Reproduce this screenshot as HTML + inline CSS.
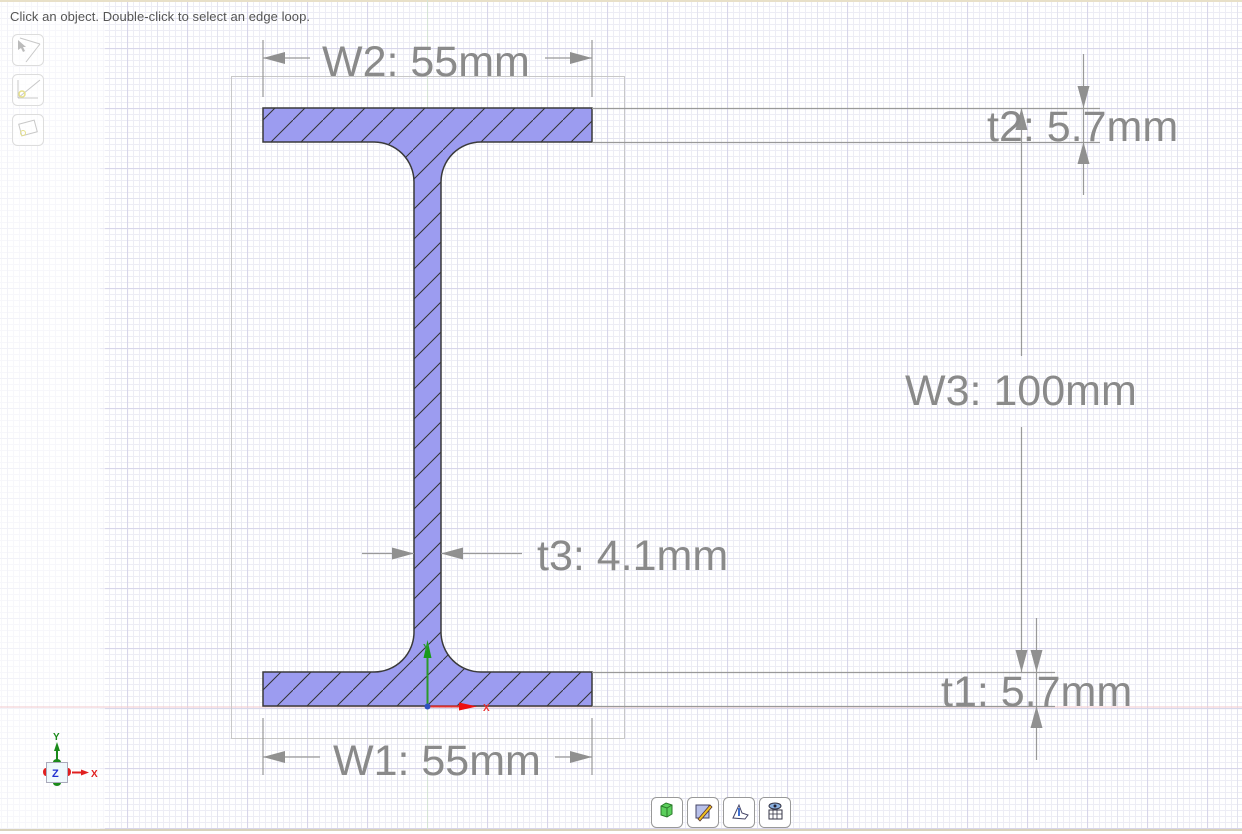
<!DOCTYPE html>
<html><head><meta charset="utf-8"><style>
html,body{margin:0;padding:0;width:1242px;height:834px;overflow:hidden;background:#fff;font-family:"Liberation Sans",sans-serif}
</style></head><body>
<svg width="1242" height="834" viewBox="0 0 1242 834" xmlns="http://www.w3.org/2000/svg" style="position:absolute;left:0;top:0">
<defs>
<pattern id="minor" width="6" height="6" patternUnits="userSpaceOnUse" x="1" y="0">
<path d="M0.5 0V6M0 0.5H6" stroke="#ededf5" stroke-width="1" fill="none"/>
</pattern>
<pattern id="mid" width="30" height="30" patternUnits="userSpaceOnUse" x="7" y="18">
<path d="M0.5 0V30M0 0.5H30" stroke="#e3e3ef" stroke-width="1" fill="none"/>
</pattern>
<pattern id="major" width="60" height="60" patternUnits="userSpaceOnUse" x="7" y="48">
<path d="M0.5 0V60M0 0.5H60" stroke="#d8d6ea" stroke-width="1.2" fill="none"/>
</pattern>
<pattern id="hatch" width="30" height="30" patternUnits="userSpaceOnUse" x="263" y="0">
<path d="M-2 32L32 -2" stroke="#333" stroke-width="1"/>
</pattern>
</defs>
<rect width="1242" height="834" fill="#fff"/>
<rect x="0" y="0" width="1242" height="834" fill="url(#minor)"/>
<rect x="0" y="0" width="1242" height="834" fill="url(#mid)"/>
<rect x="100" y="0" width="1142" height="834" fill="url(#major)"/>
<rect x="0" y="0" width="105" height="834" fill="#fff" opacity="0.55"/>
<rect x="0" y="0" width="1242" height="2" fill="#e8e0c8"/>
<rect x="0" y="829" width="1242" height="5" fill="#fff"/>
<rect x="0" y="829" width="1242" height="2" fill="#d8d2bc"/>
<line x1="0" y1="707" x2="1242" y2="707" stroke="#f2c8cc" stroke-width="1"/>
<line x1="427.5" y1="0" x2="427.5" y2="829" stroke="#d6e4d6" stroke-width="1"/>
<rect x="231.5" y="76.5" width="393" height="662" fill="none" stroke="#c8c8c8" stroke-width="1"/>
<path d="M263,108 H592 V142 H481 A40,40 0 0 0 441,182 V632 A40,40 0 0 0 481,672 H592 V706 H263 V672 H374 A40,40 0 0 0 414,632 V182 A40,40 0 0 0 374,142 H263 Z" fill="#9c9cf0"/>
<path d="M263,108 H592 V142 H481 A40,40 0 0 0 441,182 V632 A40,40 0 0 0 481,672 H592 V706 H263 V672 H374 A40,40 0 0 0 414,632 V182 A40,40 0 0 0 374,142 H263 Z" fill="url(#hatch)" stroke="#3a3a3a" stroke-width="1.5"/>
<g stroke="#999" stroke-width="1.2" fill="none">
<line x1="263" y1="40" x2="263" y2="97"/><line x1="592" y1="40" x2="592" y2="97"/>
<line x1="263" y1="58" x2="310" y2="58"/><line x1="545" y1="58" x2="592" y2="58"/>
<line x1="263" y1="718" x2="263" y2="775"/><line x1="592" y1="718" x2="592" y2="775"/>
<line x1="263" y1="757" x2="320" y2="757"/><line x1="555" y1="757" x2="592" y2="757"/>
<line x1="592" y1="108.5" x2="1100" y2="108.5"/><line x1="592" y1="142.5" x2="1100" y2="142.5"/>
<line x1="592" y1="672.5" x2="1055" y2="672.5"/><line x1="592" y1="706.5" x2="1055" y2="706.5"/>
<line x1="1021.5" y1="108" x2="1021.5" y2="356"/><line x1="1021.5" y1="427" x2="1021.5" y2="672"/>
<line x1="1083.5" y1="54" x2="1083.5" y2="195"/>
<line x1="1036.5" y1="618" x2="1036.5" y2="760"/>
<line x1="362" y1="553.5" x2="414" y2="553.5"/><line x1="441" y1="553.5" x2="522" y2="553.5"/>
</g>
<g fill="#909090">
<path d="M263,58 l22,-6 v12z"/><path d="M592,58 l-22,-6 v12z"/>
<path d="M263,757 l22,-6 v12z"/><path d="M592,757 l-22,-6 v12z"/>
<path d="M1021.5,108 l-6,22 h12z"/><path d="M1021.5,672 l-6,-22 h12z"/>
<path d="M1083.5,108 l-6,-22 h12z"/><path d="M1083.5,142 l-6,22 h12z"/>
<path d="M1036.5,672 l-6,-22 h12z"/><path d="M1036.5,706 l-6,22 h12z"/>
<path d="M414,553.5 l-22,-6 v12z"/><path d="M441,553.5 l22,-6 v12z"/>
</g>
<g fill="#8a8a8a" font-family="Liberation Sans, sans-serif" font-size="43">
<text x="322" y="76">W2: 55mm</text>
<text x="333" y="775">W1: 55mm</text>
<text x="905" y="405">W3: 100mm</text>
<text x="537" y="570">t3: 4.1mm</text>
<text x="987" y="141">t2: 5.7mm</text>
<text x="941" y="706">t1: 5.7mm</text>
</g>
<line x1="427.5" y1="706" x2="427.5" y2="655" stroke="#2a9a2a" stroke-width="2"/>
<path d="M427.5,640 l-4,18 h8z" fill="#1a9a1a"/>
<line x1="427" y1="706.5" x2="462" y2="706.5" stroke="#e03030" stroke-width="2"/>
<path d="M477,706.5 l-18,-4 v8z" fill="#ee1010"/>
<circle cx="427.5" cy="706.5" r="3" fill="#3050c0"/>
<text x="423" y="651" font-size="10" fill="#2a9a2a" font-weight="bold">Y</text>
<text x="483" y="711" font-size="10" fill="#ee3030" font-weight="bold">X</text>
<line x1="57" y1="760" x2="57" y2="748" stroke="#1a8a1a" stroke-width="2"/>
<path d="M57,742 l-3,9 h6z" fill="#1a8a1a"/>
<text x="53" y="740" font-size="10" font-weight="bold" fill="#1a8a1a">Y</text>
<rect x="46.5" y="762.5" width="21" height="20" fill="#eef8fc" stroke="#aab" stroke-width="1"/>
<text x="52" y="777" font-size="11" font-weight="bold" fill="#2030d0">Z</text>
<path d="M46,768 a3,4 0 0 0 0,8z M68,768 a3,4 0 0 1 0,8z" fill="#e02020"/>
<path d="M53,762 a4,3 0 0 1 8,0z M53,783 a4,3 0 0 0 8,0z" fill="#1a8a1a"/>
<line x1="72" y1="772.5" x2="82" y2="772.5" stroke="#e02020" stroke-width="2"/>
<path d="M89,772.5 l-8,-3 v6z" fill="#e02020"/>
<text x="91" y="777" font-size="10" font-weight="bold" fill="#e02020">X</text>
<g fill="#fff" fill-opacity="0.6" stroke="#ddd" stroke-width="1">
<rect x="12.5" y="34.5" width="31" height="31" rx="5"/>
<rect x="12.5" y="74.5" width="31" height="31" rx="5"/>
<rect x="12.5" y="114.5" width="31" height="31" rx="5"/>
</g>
<g stroke="#c8c8c8" stroke-width="1" fill="none">
<line x1="20" y1="38" x2="40" y2="44"/><line x1="40" y1="44" x2="26" y2="62"/>
<line x1="18" y1="98" x2="40" y2="80"/><line x1="18" y1="80" x2="18" y2="98"/><line x1="18" y1="98" x2="38" y2="98"/>
<rect x="20" y="122" width="16" height="12" transform="rotate(-15 28 128)"/>
</g>
<path d="M18,40 l0,10 l3,-2 l2,4 l2,-1 l-2,-4 l3,0z" fill="#bbb"/>
<circle cx="22" cy="94" r="3" fill="none" stroke="#e6e08a" stroke-width="1.5"/>
<circle cx="23" cy="133" r="2.5" fill="none" stroke="#e6e08a" stroke-width="1"/>
<g fill="#fff" stroke="#999" stroke-width="1">
<rect x="651.5" y="797.5" width="31" height="30" rx="5"/>
<rect x="687.5" y="797.5" width="31" height="30" rx="5"/>
<rect x="723.5" y="797.5" width="31" height="30" rx="5"/>
<rect x="759.5" y="797.5" width="31" height="30" rx="5"/>
</g>
<path d="M661,806 l5,-3 l6,2 v9 l-5,3 l-6,-2z" fill="#5ccf5c" stroke="#2a7a2a" stroke-width="1"/>
<path d="M661,806 l6,2 l5,-3 M667,808 v9" stroke="#2a7a2a" fill="none" stroke-width="1"/>
<rect x="696" y="805" width="13" height="13" fill="#b8c0e8" stroke="#446" stroke-width="1"/>
<path d="M698,819 l12,-14 l2,2 l-12,14z" fill="#f0c020" stroke="#533" stroke-width="0.8"/>
<path d="M733,818 l6,-13 l3,8 l6,2 l-3,4z" fill="#fff" stroke="#446" stroke-width="1"/>
<path d="M739,808 v8" stroke="#4070d0" stroke-width="2"/>
<rect x="769" y="810" width="13" height="9" fill="#fff" stroke="#334" stroke-width="1"/>
<path d="M769,814 h13 M773,810 v9 M777,810 v9" stroke="#334" stroke-width="0.8"/>
<ellipse cx="775" cy="806" rx="6" ry="3" fill="#8ab0e0" stroke="#334" stroke-width="1"/>
<circle cx="775" cy="806" r="1.5" fill="#223"/>
<text x="10" y="21" font-size="13" fill="#555" font-family="Liberation Sans, sans-serif" textLength="300">Click an object. Double-click to select an edge loop.</text>
</svg>
</body></html>
